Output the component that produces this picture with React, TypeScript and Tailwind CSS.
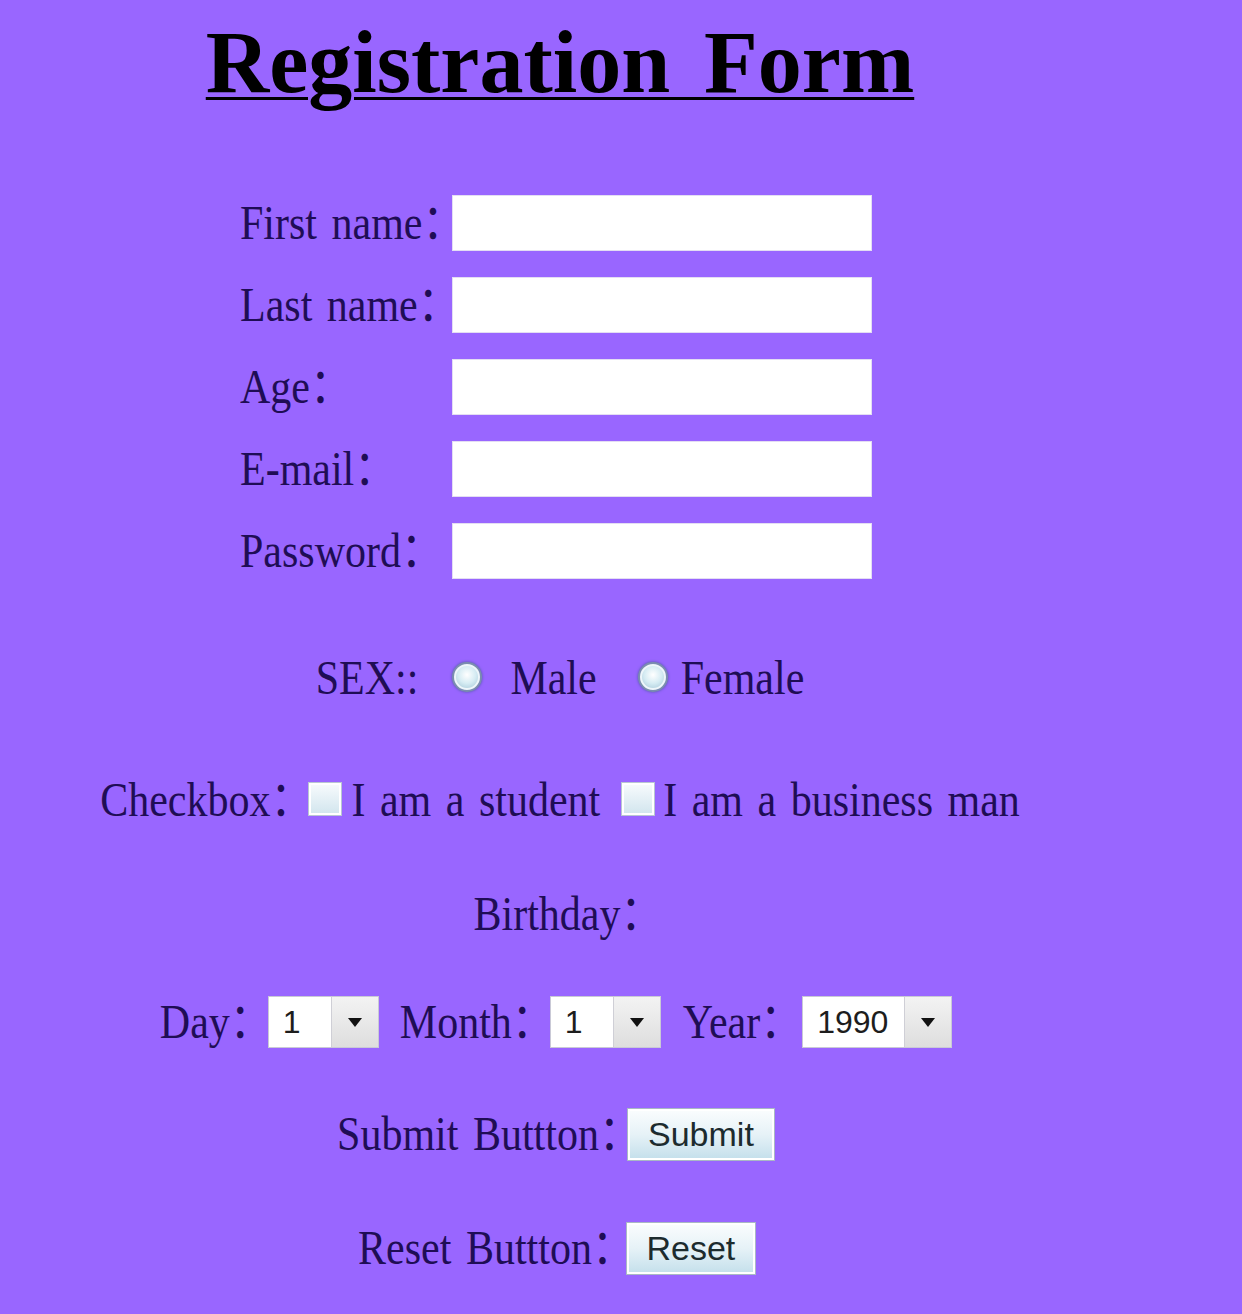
import React from "react";

const serif = "font-['Liberation_Serif','Noto_Sans_CJK_SC',serif]";
const sans = "font-['Liberation_Sans',Arial,sans-serif]";

const Label = ({ children, className = "" }: { children: React.ReactNode; className?: string }) => (
  <span
    className={`inline-block scale-y-[1.15] whitespace-pre text-[42px] leading-none text-[#1f0d55] [word-spacing:4px] ${serif} ${className}`}
  >
    {children}
  </span>
);

const Field = ({ label }: { label: string }) => (
  <div className="flex h-[56px] items-center">
    <div className="w-[212px]">
      <Label>{label}</Label>
    </div>
    <input
      type="text"
      className="h-[56px] w-[420px] border border-[#e3ddf3] bg-white outline-none"
    />
  </div>
);

const Radio = () => (
  <span className="inline-flex h-[30px] w-[30px] items-center justify-center rounded-full border-2 border-[#7b8db0] bg-[#eef6fa] shadow-[0_0_3px_#4a5aa0]">
    <span className="h-[22px] w-[22px] rounded-full bg-[radial-gradient(circle_at_50%_40%,#ffffff_0%,#d6ecf3_50%,#a3c6d6_100%)]" />
  </span>
);

const Check = () => (
  <span className="inline-flex h-[34px] w-[34px] items-center justify-center border border-[#b9c6d2] bg-white">
    <span className="h-[28px] w-[28px] bg-gradient-to-b from-[#f6fafc] to-[#d3e6ee]" />
  </span>
);

const Select = ({ value, width }: { value: string; width: string }) => (
  <div className={`flex h-[52px] border border-[#c9c9d6] bg-white ${width}`}>
    <div className={`flex flex-1 items-center pl-[14px] text-[32px] text-[#1d1d1d] ${sans}`}>{value}</div>
    <div className="flex w-[47px] items-center justify-center border-l border-[#cfcfd6] bg-gradient-to-b from-[#f3f3f3] to-[#dedede]">
      <svg width="14" height="9" viewBox="0 0 14 9">
        <path d="M0 0h14L7 9z" fill="#111" />
      </svg>
    </div>
  </div>
);

const Btn = ({ text, width }: { text: string; width: string }) => (
  <button
    type="button"
    className={`h-[53px] border border-[#a9b8c4] bg-gradient-to-b from-[#fbfdfe] via-[#e6f2f7] to-[#c3dfeb] text-[34px] leading-none text-[#1c2b2e] shadow-[inset_0_0_0_2px_#ffffff] ${sans} ${width}`}
  >
    {text}
  </button>
);

export default function App() {
  return (
    <div className="min-h-screen bg-[#9966ff]">
      <div className="flex w-[1120px] flex-col items-center pt-[19px]">
        <h1
          className={`text-[88px] font-bold leading-none text-black underline decoration-[3px] underline-offset-[5px] [word-spacing:12px] font-['Liberation_Serif',serif]`}
        >
          Registration Form
        </h1>

        <div className="mr-[8px] mt-[88px] flex flex-col gap-[26px]">
          <Field label="First name：" />
          <Field label="Last name：" />
          <Field label="Age：" />
          <Field label="E-mail：" />
          <Field label="Password：" />
        </div>

        <div className="mt-[71px] flex h-[56px] items-center">
          <Label>SEX::</Label>
          <span className="ml-[34px]">
            <Radio />
          </span>
          <Label className="ml-[28px]">Male</Label>
          <span className="ml-[41px]">
            <Radio />
          </span>
          <Label className="ml-[13px]">Female</Label>
        </div>

        <div className="mt-[66px] flex h-[56px] items-center">
          <Label>Checkbox：</Label>
          <span className="ml-[-4px]">
            <Check />
          </span>
          <Label className="ml-[9px]">I am a student</Label>
          <span className="ml-[21px]">
            <Check />
          </span>
          <Label className="ml-[8px]">I am a business man</Label>
        </div>

        <div className="mt-[58px] flex h-[56px] items-center">
          <Label className="ml-[16px]">Birthday：</Label>
        </div>

        <div className="mr-[8px] mt-[52px] flex h-[56px] items-center">
          <Label>Day：</Label>
          <div className="ml-[-4px]">
            <Select value="1" width="w-[111px]" />
          </div>
          <Label className="ml-[21px]">Month：</Label>
          <div className="ml-[-4px]">
            <Select value="1" width="w-[111px]" />
          </div>
          <Label className="ml-[22px]">Year：</Label>
          <div className="ml-[0px]">
            <Select value="1990" width="w-[150px]" />
          </div>
        </div>

        <div className="mr-[8px] mt-[56px] flex h-[56px] items-center">
          <Label>Submit Buttton：</Label>
          <div className="ml-[-14px]">
            <Btn text="Submit" width="w-[148px]" />
          </div>
        </div>

        <div className="mr-[6px] mt-[58px] flex h-[56px] items-center">
          <Label>Reset Buttton：</Label>
          <div className="ml-[-8px]">
            <Btn text="Reset" width="w-[130px]" />
          </div>
        </div>
      </div>
    </div>
  );
}
